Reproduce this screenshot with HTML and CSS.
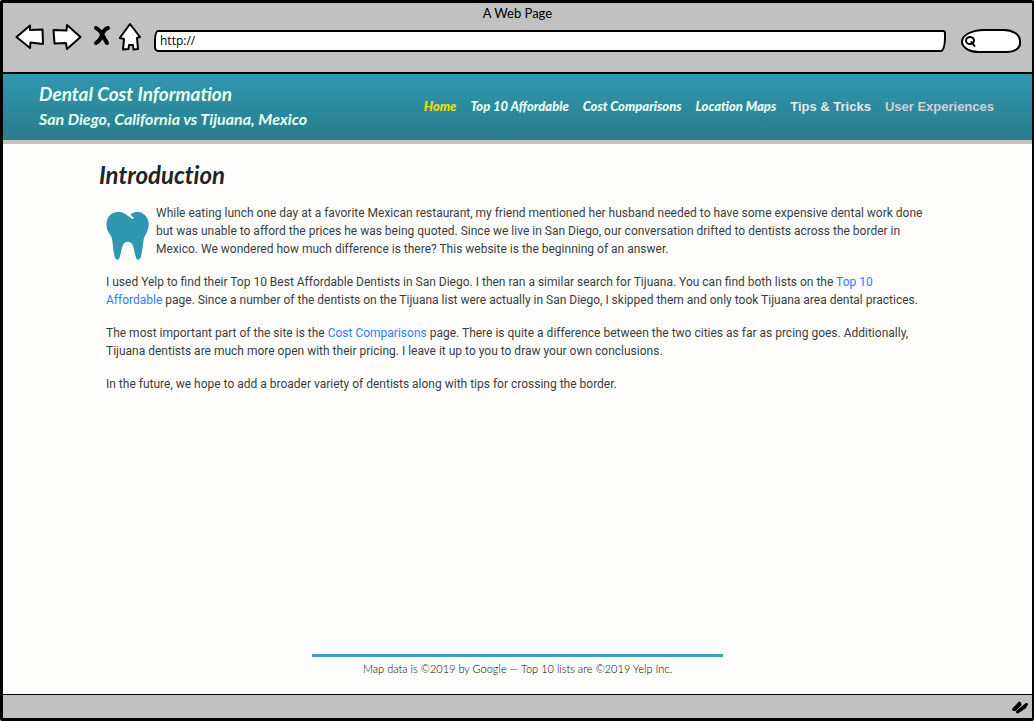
FILE: index.html
```html
<!DOCTYPE html>
<html lang="en">
<head>
<meta charset="utf-8">
<title>A Web Page</title>
<link rel="stylesheet" href="styles.css">
</head>
<body>
<div class="window">
  <div class="chrome">
    <div class="window-title">A Web Page</div>
    <div class="toolbar">
      <button class="tool back" aria-label="Back"><svg width="30" height="30" viewBox="0 0 30 30"><path class="outline" d="M1.500 15 15 3.500 15 8 27.500 7.500 28 22 15.500 20.500 15 26Z"/></svg></button>
      <button class="tool forward" aria-label="Forward"><svg width="30" height="30" viewBox="0 0 30 30"><path class="outline" d="M1.500 8 14.500 8.500 15 3 28.500 15 15 27 14 21 2.500 21.500Z"/></svg></button>
      <button class="tool stop" aria-label="Stop"><svg width="20" height="30" viewBox="0 0 20 30"><path class="stroke" d="M4 6Q8 8 10 12T15 21M16 6Q12 7 10 13T4 21"/></svg></button>
      <button class="tool home" aria-label="Home"><svg width="24" height="30" viewBox="0 0 24 30"><path class="outline" d="M11 2 21 15 18 16 19 27 14.500 27.500 14 23 10 23 9.500 27 4 27.500 5 17 .8 16Z"/></svg></button>
      <input class="address" type="text" value="http://" aria-label="Address">
      <label class="search">
        <svg width="16" height="16" viewBox="0 0 16 16"><ellipse class="lens" cx="7" cy="7.500" rx="4" ry="3.600"/><path class="lens" d="M8.500 9 11.500 13"/></svg>
        <input class="search-input" type="text" aria-label="Search">
      </label>
    </div>
  </div>
  <header class="site-header">
    <div class="brand">
      <div class="site-name">Dental Cost Information</div>
      <div class="site-place">San Diego, California vs Tijuana, Mexico</div>
    </div>
    <nav class="nav">
      <a class="nav-link current" href="#">Home</a>
      <a class="nav-link" href="#">Top 10 Affordable</a>
      <a class="nav-link" href="#">Cost Comparisons</a>
      <a class="nav-link" href="#">Location Maps</a>
      <a class="nav-link planned" href="#">Tips &amp; Tricks</a>
      <a class="nav-link planned dim" href="#">User Experiences</a>
    </nav>
  </header>
  <main class="content">
    <h1 class="heading">Introduction</h1>
    <div class="article">
      <div class="lead">
        <svg class="tooth" width="43" height="50" viewBox="0 0 43 50"><path d="M11 1C16 0 20 3.500 25 7Q27 9 28 6.500Q25.500 5.500 24.500 3.500C29 0 34 0 37.500 3C42 6 44 12 42 18C41 23 38 25 37.500 30C36.500 38 35.500 44 34.500 47Q32.500 50 30.500 48C28 42 28.500 34 24.500 31.500Q21.500 30 18.500 32C15 35 15.500 43 13 48Q11 50 9 47C7 41 7 33 6 28C5 23 1 22 .5 15C0 7 4 2 11 1Z"/></svg>
        <p>While eating lunch one day at a favorite Mexican restaurant, my friend mentioned her husband needed to have some expensive dental work done but was unable to afford the prices he was being quoted. Since we live in San Diego, our conversation drifted to dentists across the border in Mexico. We wondered how much difference is there? This website is the beginning of an answer.</p>
      </div>
      <p>I used Yelp to find their Top 10 Best Affordable Dentists in San Diego. I then ran a similar search for Tijuana. You can find both lists on the <a class="link" href="#">Top 10 Affordable</a> page. Since a number of the dentists on the Tijuana list were actually in San Diego, I skipped them and only took Tijuana area dental practices.</p>
      <p>The most important part of the site is the <a class="link" href="#">Cost Comparisons</a> page. There is quite a difference between the two cities as far as prcing goes. Additionally, Tijuana dentists are much more open with their pricing. I leave it up to you to draw your own conclusions.</p>
      <p>In the future, we hope to add a broader variety of dentists along with tips for crossing the border.</p>
    </div>
  </main>
  <footer class="site-footer">Map data is ©2019 by Google — Top 10 lists are ©2019 Yelp Inc.</footer>
  <div class="status-bar">
    <svg width="22" height="18" viewBox="0 0 22 18"><path class="grip" d="M3.500 11.500 9.500 5M8 13.500 16.500 6.500M5 11.500 10 6.500M7.500 14 15 9"/></svg>
  </div>
</div>
</body>
</html>
```
FILE: styles.css
```css
* {
  box-sizing: border-box;
}

body {
  margin: 0;
  background: #fff;
  font-family: Roboto, "Liberation Sans", sans-serif;
}

.window {
  display: flex;
  flex-direction: column;
  min-height: 100vh;
  border: solid #000;
  border-width: 3px 2px 3px 3px;
  border-radius: 2px;
  background: #fffefd;
}

.chrome {
  background: #c1c1c1;
  border-bottom: 2px solid #000;
}

.window-title {
  padding-top: 2px;
  font: 13px/16px Lato, "Liberation Sans", sans-serif;
  text-align: center;
  color: #000;
}

.toolbar {
  display: flex;
  align-items: center;
  padding: 0 11px 19px 12px;
}

.tool {
  display: block;
  padding: 0;
  border: 0;
  background: none;
}

.tool svg {
  display: block;
}

.forward {
  margin-left: 7px;
}

.stop {
  margin-left: 10px;
}

.home {
  margin: 0 11px 0 7px;
}

.outline {
  fill: #fff;
  stroke: #000;
  stroke-width: 2;
  stroke-linejoin: round;
}

.stroke {
  fill: none;
  stroke: #000;
  stroke-width: 4;
  stroke-linecap: round;
}

.address {
  flex: 1;
  min-width: 0;
  height: 22px;
  margin: 8px 15px 0 0;
  padding: 0 4px 2px;
  border: 2px solid #000;
  border-radius: 4px 3px 5px 4px / 10px 3px 14px 5px;
  background: #fff;
  font: 12px/16px "Open Sans", "Liberation Sans", sans-serif;
  color: #000;
}

.search {
  display: flex;
  align-items: center;
  width: 60px;
  height: 24px;
  margin-top: 8px;
  border: 2px solid #000;
  border-radius: 24px 18px 14px 18px / 13px 12px 10px 12px;
  background: #fff;
}

.search-input {
  flex: 1;
  min-width: 0;
  padding: 0;
  border: 0;
  background: none;
}

.lens {
  fill: none;
  stroke: #000;
  stroke-width: 2;
  stroke-linecap: round;
}

.site-header {
  display: flex;
  align-items: center;
  justify-content: space-between;
  padding: 7px 38px 9px 36px;
  background: linear-gradient(#3098b0, #297c8c);
  box-shadow: 0 4px 0 #c4c3c1;
  font-family: Lato, "Liberation Sans", sans-serif;
  color: #e6fff2;
}

.site-name {
  font-size: 19px;
  font-style: italic;
  font-weight: 700;
  line-height: 26px;
}

.site-place {
  font-size: 16px;
  font-style: italic;
  font-weight: 700;
  line-height: 24px;
}

.nav {
  display: flex;
  align-items: baseline;
  gap: 14px;
}

.nav-link {
  font-size: 13px;
  font-style: italic;
  font-weight: 900;
  line-height: 20px;
  color: inherit;
  text-decoration: none;
}

.current {
  color: #f4dc00;
}

.planned {
  font-family: "Liberation Sans", Arial, sans-serif;
  font-style: normal;
  font-weight: 700;
  color: #e6e6e6;
}

.dim {
  color: #cfd2d2;
}

.content {
  flex: 1;
  padding: 17px 96px 0;
}

.heading {
  margin: 0 0 11px;
  font: italic 700 24px/36px Lato, "Liberation Sans", sans-serif;
  font-variant-ligatures: none;
  color: #212529;
}

.article {
  padding: 0 7px;
  font-size: 12px;
  line-height: 18px;
  color: #383d41;
}

.article p {
  margin: 0 0 15px;
}

.lead {
  display: flex;
  gap: 7px;
}

.tooth {
  flex: none;
  margin-top: 7px;
  fill: #3098ae;
}

.link {
  color: #2f7bff;
  text-decoration: none;
}

.site-footer {
  width: 40%;
  margin: 0 auto 16px;
  padding-top: 3px;
  border-top: 3px solid #3c9fb2;
  font: 300 11px/18px Lato, "Liberation Sans", sans-serif;
  text-align: center;
  color: #000;
}

.status-bar {
  display: flex;
  align-items: center;
  justify-content: flex-end;
  height: 24px;
  border-top: 1px solid #000;
  background: #c1c1c1;
}

.grip {
  fill: none;
  stroke: #000;
  stroke-width: 3;
  stroke-linecap: round;
}
```
